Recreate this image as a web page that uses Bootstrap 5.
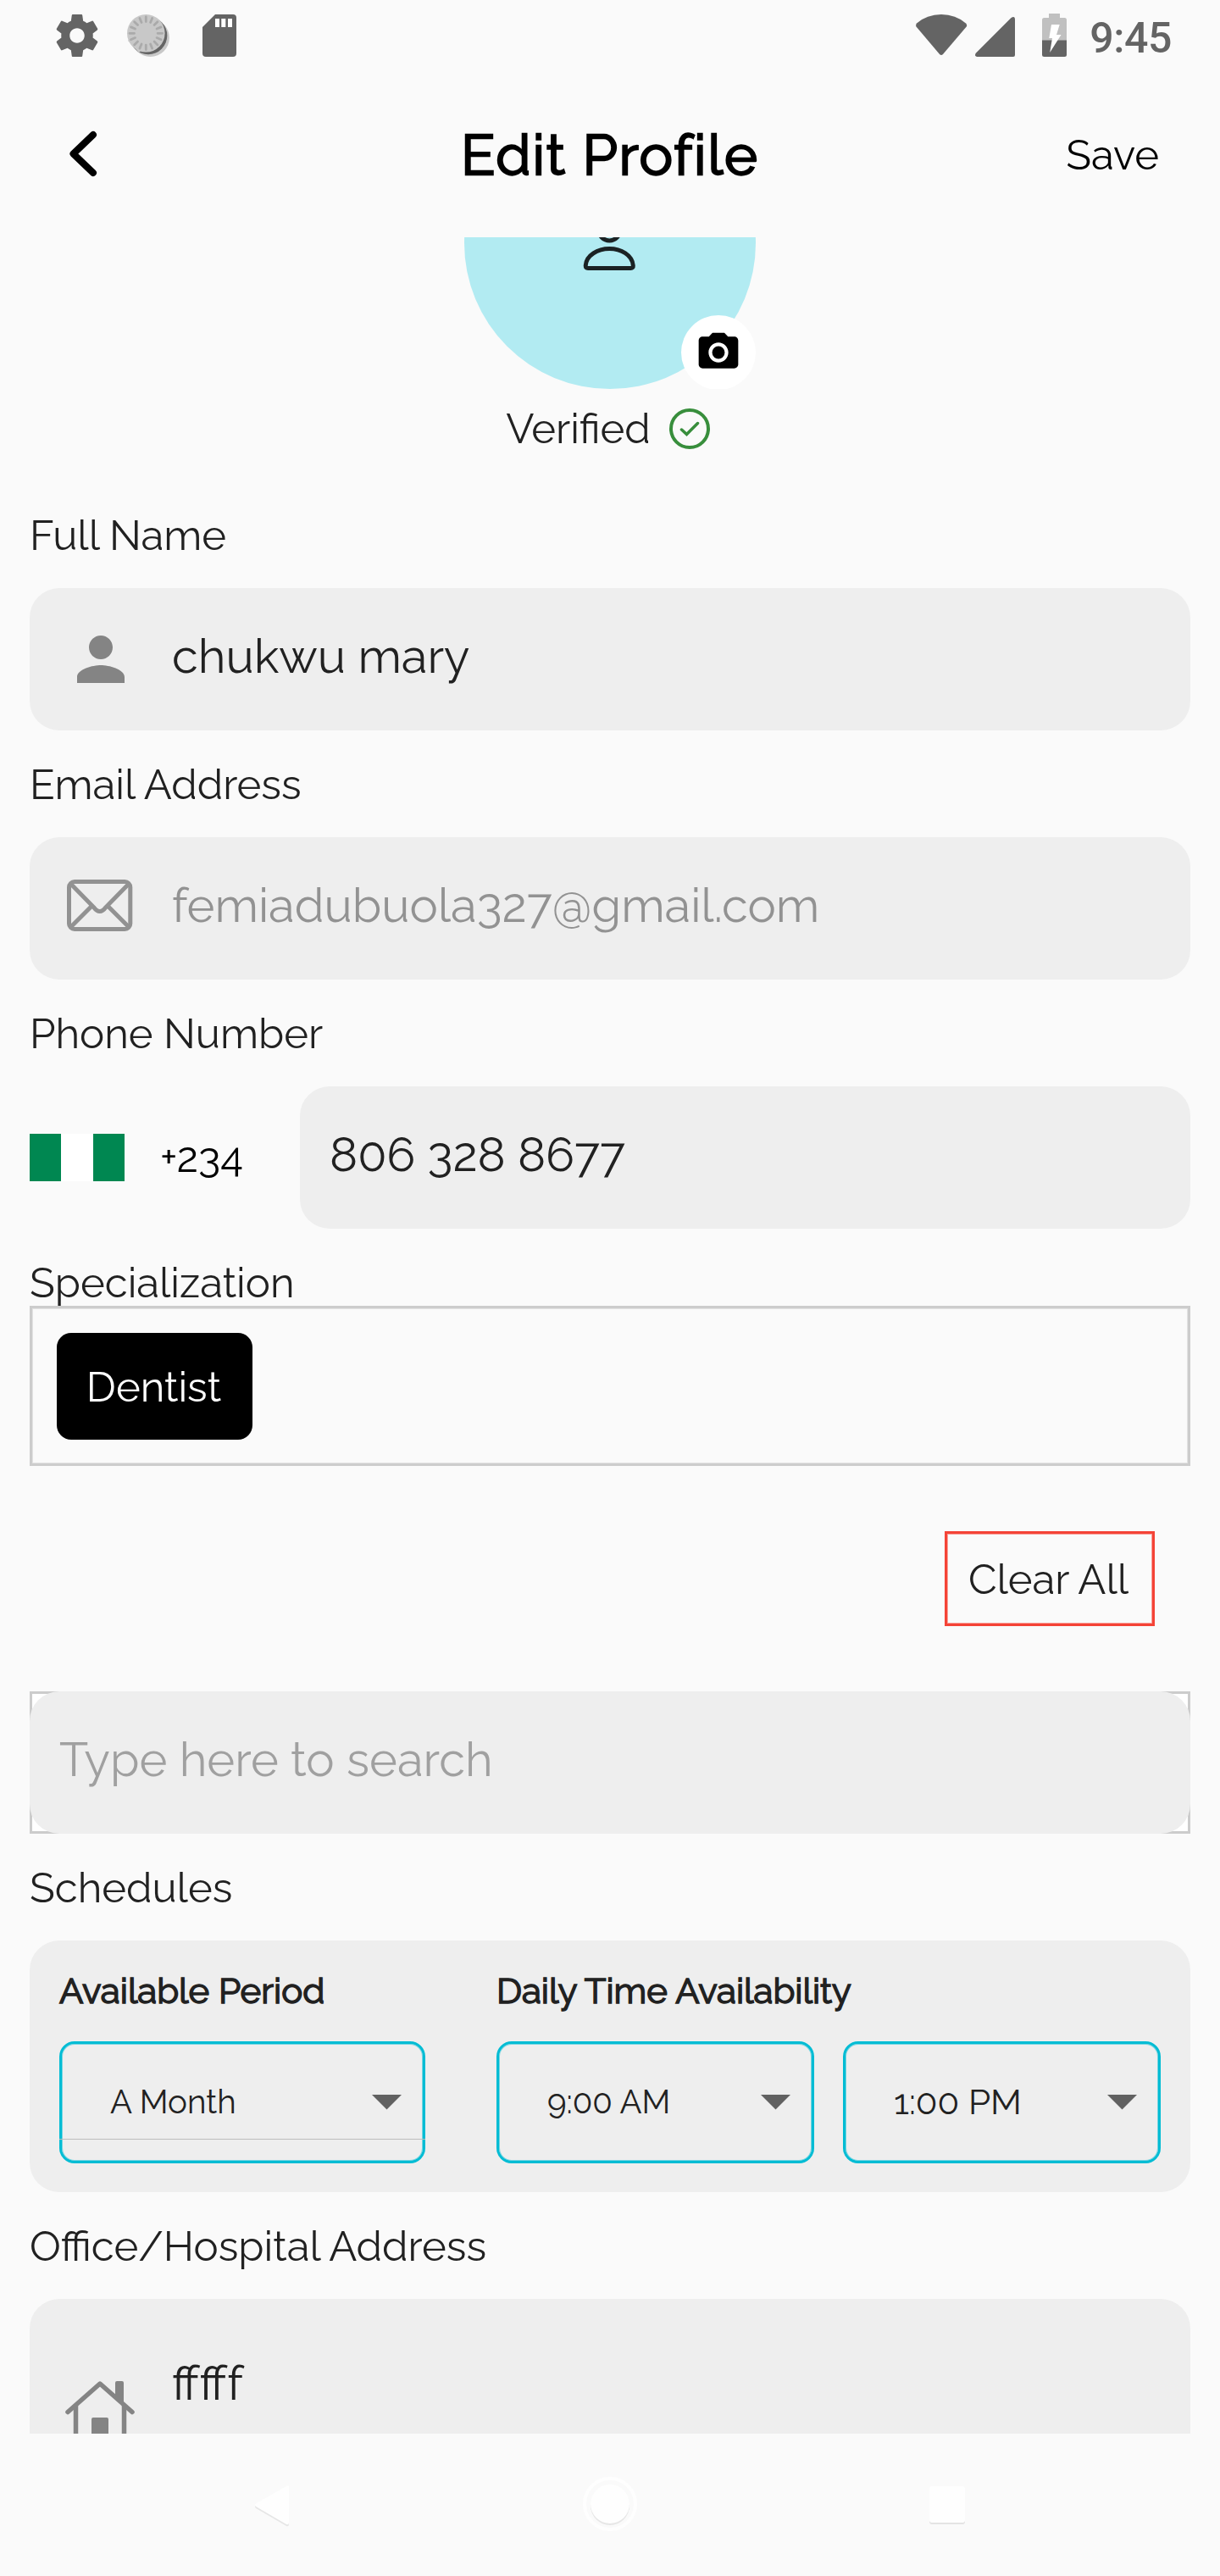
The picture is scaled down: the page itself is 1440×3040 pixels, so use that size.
<!DOCTYPE html>
<html lang="en">
<head>
<meta charset="utf-8">
<meta name="viewport" content="width=device-width, initial-scale=1">
<title>Edit Profile</title>
<link href="https://cdn.jsdelivr.net/npm/bootstrap@5.3.0/dist/css/bootstrap.min.css" rel="stylesheet">
<style>
  body { background: #fafafa; color: #212121; font-family: Raleway, Lato, sans-serif; font-size: 49px; line-height: 62px; }
  svg { display: block; flex: none; }
  .screen { width: 1440px; height: 3040px; }
  .status-bar { height: 84px; padding: 0 57px 0 66px; color: #646464; }
  .clock { font: 500 50px/60px Roboto, sans-serif; letter-spacing: -.4px; margin: 5px 0 0 27px; }
  .app-bar { height: 196px; padding: 0 72px; color: #000; }
  .side-slot { flex: 1 1 0; padding-top: 2px; }
  .back-icon { margin: -2px 0 0 6px; }
  .fake-bold { -webkit-text-stroke: 1.5px currentColor; }
  .page-title { font-size: 66.5px; font-weight: 400; line-height: 80px; letter-spacing: 1.75px; padding-top: 1px !important; -webkit-text-stroke: 2.3px currentColor; }
  .scroll-area { height: 2592px; padding: 0 35px; }
  .avatar-clip { height: 179px; }
  .avatar { width: 344px; height: 344px; background: #b2ebf2; }
  .avatar-person { margin-top: 130px; }
  .camera-btn { width: 88px; height: 88px; right: 0; bottom: -1px; }
  .verified-row { height: 94px; gap: 22px; margin-bottom: 47px; padding-right: 5px; }
  .field-label { height: 62px; margin: 32px 0; line-height: 64px; }
  .field-box { height: 168px; background: #eee; border-radius: 35px; font-size: 56px; line-height: 66px; }
  .with-icon { padding-left: 42px; gap: 42px; }
  .plain-pad { padding-left: 35px; }
  .muted-value { color: #929292; }
  .hint-value { color: #a0a0a0; }
  .flag { width: 112px; height: 56px; background: linear-gradient(90deg, #008751 33.4%, #fff 33.4% 66.6%, #008751 66.6%); }
  .country { width: 319px; gap: 42px; color: #000; }
  .label-tight { height: 59px; margin-bottom: 0; }
  .chips-box { height: 189px; border: 3px solid #ccc; box-shadow: inset 0 0 0 1px #e3e3e3; padding: 29px; background: #fafafa; position: relative; }
  .chip { height: 126px; width: 231px; border-radius: 17px; background: #000; color: #fff; padding: 1px 2px 0 0; }
  .clear-btn { width: 248px; height: 112px; margin: 77px 42px 77px 0; padding: 1px 3px 0 0; border: 3px solid #f44336; box-shadow: inset 0 0 0 1px #faa09a; }
  .search-frame { height: 168px; border: 3px solid #ccc; background: #fff; }
  .search-frame .field-box { margin: -3px; }
  .schedule-card { height: 297px; padding: 35px; background: #eee; border-radius: 35px; }
  .schedule-card h2 { font-size: 42px; font-weight: 400; line-height: 48px; margin: 1px 0 35px; }
  .period-col { width: 432px; margin-right: 84px; }
  .time-pair { gap: 34px; }
  .picker { height: 144px; border: 3px solid #00bcd4; border-radius: 18px; box-shadow: inset 0 0 0 1px #77d5e1; padding: 0 25px 1px 57px; font-size: 42px; flex: 1 1 0; }
  .picker-sm { font-size: 38.5px; }
  .picker-line { left: -3px; right: -3px; top: 112px; height: 1px; background: #bdbdbd; }
  .address-box { height: 260px; }
  .address-box svg { margin-top: 93px; }
  .address-box span { margin-top: 66px; }
  .nav-bar { height: 168px; padding: 0 280px 0 279px; }
</style>
</head>
<body>
<div class="screen d-flex flex-column overflow-hidden">

  <div class="status-bar d-flex align-items-center">
    <svg width="50" height="50" viewBox="2 2 20 20" fill="currentColor"><path d="M19.43 12.98c.04-.32.07-.64.07-.98s-.03-.66-.07-.98l2.11-1.65c.19-.15.24-.42.12-.64l-2-3.46c-.12-.22-.39-.3-.61-.22l-2.49 1c-.52-.4-1.08-.73-1.69-.98l-.38-2.65C14.46 2.18 14.25 2 14 2h-4c-.25 0-.46.18-.49.42l-.38 2.65c-.61.25-1.17.59-1.69.98l-2.49-1c-.23-.09-.49 0-.61.22l-2 3.46c-.13.22-.07.49.12.64l2.11 1.65c-.04.32-.07.65-.07.98s.03.66.07.98l-2.11 1.65c-.19.15-.24.42-.12.64l2 3.46c.12.22.39.3.61.22l2.49-1c.52.4 1.08.73 1.69.98l.38 2.65c.03.24.24.42.49.42h4c.25 0 .46-.18.49-.42l.38-2.65c.61-.25 1.17-.59 1.69-.98l2.49 1c.23.09.49 0 .61-.22l2-3.46c.12-.22.07-.49-.12-.64l-2.11-1.65zM12 15.5c-1.93 0-3.5-1.57-3.5-3.5s1.57-3.5 3.5-3.5 3.5 1.57 3.5 3.5-1.57 3.5-3.5 3.5z"/></svg>
    <svg class="ms-4" width="60" height="50" viewBox="140 17 60 50">
      <path d="M157 55.5L163 61.5 192 31 187 24z" fill="#c8c8c8"/>
      <circle cx="177.5" cy="44.6" r="22.4" fill="#c8c8c8"/>
      <circle cx="175" cy="42" r="22.3" fill="#646464"/>
      <path d="M151 48L164 62 178 50 160 36z" fill="#c8c8c8"/>
      <circle cx="172.3" cy="39.3" r="22.3" fill="#c8c8c8"/>
      <g stroke="#aaa" stroke-width="2.8" stroke-linecap="round">
        <g id="tick4"><path d="M172.3 20V25.500M172.300 53.100V58.600M153 39.300H158.500M186.100 39.300H191.600"/></g>
        <use href="#tick4" transform="rotate(22.5 172.3 39.3)"/>
        <use href="#tick4" transform="rotate(45 172.3 39.3)"/>
        <use href="#tick4" transform="rotate(67.5 172.3 39.3)"/>
      </g>
    </svg>
    <svg width="79" height="50" viewBox="200 17 79 50"><path fill="currentColor" d="M254 17H275a4 4 0 0 1 4 4V63a4 4 0 0 1-4 4H243a4 4 0 0 1-4-4V32z"/><path fill="#fff" d="M254 22h5v10h-5zM261.300 22h5v10h-5zM269 22h5v10h-5z"/></svg>

    <svg class="ms-auto" width="178" height="52" viewBox="1082 16 178 52">
      <path fill="currentColor" d="M1083 27.500Q1095 17 1112 17T1141 27.500Q1143 29.500 1141.700 31.500L1114 64Q1112 66 1110 64L1082.500 31.500Q1081.500 29.500 1083 27.500z"/>
      <path fill="currentColor" d="M1153 62.500L1194.500 21Q1199 18.500 1199 23V65q0 2-2 2H1154Q1150.500 66 1153 62.500z"/>
      <path fill="#c0c0c0" d="M1239 16h13v5h5.500q2.500 0 2.500 2.500V48h-29V23.500q0-2.500 2.500-2.500H1239z"/>
      <path fill="currentColor" d="M1231 47.500h29V64.500q0 2.500-2.500 2.500h-24q-2.500 0-2.500-2.500z"/>
      <path fill="#fff" d="M1242 29H1251.700L1248 41H1253.500L1240.200 62 1243 45H1239.300z"/>
    </svg>
    <span class="clock">9:45</span>
  </div>

  <header class="app-bar d-flex align-items-center">
    <div class="side-slot">
      <svg class="back-icon" width="40" height="60" viewBox="78 152 40 60" fill="none" stroke="#000" stroke-width="8" stroke-linecap="round" stroke-linejoin="round"><path d="M110 159L86.500 181.500 110 204"/></svg>
    </div>
    <h1 class="page-title m-0">Edit Profile</h1>
    <div class="side-slot text-end">Save</div>
  </header>

  <main class="scroll-area overflow-hidden">
    <div class="avatar-clip d-flex justify-content-center align-items-end overflow-hidden">
      <div class="avatar rounded-circle position-relative flex-shrink-0 d-flex justify-content-center">
        <svg class="avatar-person" width="84" height="84" viewBox="678 245 84 84" fill="none" stroke="#1b2224" stroke-width="5">
          <circle cx="719.3" cy="271.2" r="12.700"/>
          <path d="M694 316.500H744.600Q747.500 316.500 747.300 313.300C746.300 301 733 293.500 719.300 293.500S692 301 691.200 313.300Q691.200 316.500 694 316.500z"/>
        </svg>
        <span class="camera-btn position-absolute bg-white rounded-circle d-flex align-items-center justify-content-center">
          <svg width="56" height="56" viewBox="0 0 24 24"><circle cx="12" cy="12" r="3.2"/><path d="M9 2L7.170 4H4c-1.100 0-2 .9-2 2v12c0 1.100.9 2 2 2h16c1.100 0 2-.9 2-2V6c0-1.100-.9-2-2-2h-3.170L15 2H9zm3 15c-2.760 0-5-2.240-5-5s2.240-5 5-5 5 2.240 5 5-2.240 5-5 5z"/></svg>
        </span>
      </div>
    </div>
    <div class="verified-row d-flex align-items-center justify-content-center">
      <span>Verified</span>
      <svg width="48" height="48" viewBox="790 482 48 48" fill="none" stroke="#388e3c"><circle cx="814" cy="506" r="22" stroke-width="4"/><path stroke-width="3.5" stroke-linecap="round" d="M804.500 507L810.500 512.500 823.500 499.500"/></svg>
    </div>

    <div class="field-label">Full Name</div>
    <div class="field-box with-icon d-flex align-items-center">
      <svg width="84" height="84" viewBox="0 0 24 24" fill="#848484"><path d="M12 12c2.210 0 4-1.790 4-4s-1.790-4-4-4-4 1.790-4 4 1.790 4 4 4zm0 2c-2.670 0-8 1.340-8 4v2h16v-2c0-2.660-5.330-4-8-4z"/></svg>
      <span class="mb-2">chukwu mary</span>
    </div>

    <div class="field-label">Email Address</div>
    <div class="field-box with-icon muted-value d-flex align-items-center">
      <svg width="84" height="84" viewBox="77 1030 84 84" fill="none" stroke="currentColor" stroke-width="5"><rect x="81.500" y="1040.500" width="72.300" height="56" rx="6.500"/><path d="M83 1042.500L110.500 1070.500Q117.700 1080.500 125 1070.500L152.500 1042.500M83 1094.500L108 1069.500M152.500 1094.500L127.500 1069.500"/></svg>
      <span class="mb-2">femiadubuola327@gmail.com</span>
    </div>

    <div class="field-label">Phone Number</div>
    <div class="d-flex align-items-center">
      <div class="country d-flex align-items-center"><div class="flag"></div><span>+234</span></div>
      <div class="field-box plain-pad flex-grow-1 d-flex align-items-center"><span class="mb-2">806 328 8677</span></div>
    </div>

    <div class="field-label label-tight">Specialization</div>
    <div class="chips-box"><div class="chip d-flex align-items-center justify-content-center">Dentist</div></div>

    <div class="d-flex justify-content-end">
      <div class="clear-btn d-flex align-items-center justify-content-center">Clear All</div>
    </div>

    <div class="search-frame">
      <div class="field-box plain-pad hint-value d-flex align-items-center"><span class="mb-2">Type here to search</span></div>
    </div>

    <div class="field-label">Schedules</div>
    <section class="schedule-card d-flex">
      <div class="period-col">
        <h2 class="fake-bold">Available Period</h2>
        <div class="picker picker-sm position-relative d-flex align-items-center justify-content-between">
          <span>A Month</span>
          <svg width="35" height="18" viewBox="0 0 35 18"><path fill="#616161" d="M0 0H35L17.500 17.500z"/></svg>
          <i class="picker-line position-absolute"></i>
        </div>
      </div>
      <div class="flex-grow-1">
        <h2 class="fake-bold">Daily Time Availability</h2>
        <div class="time-pair d-flex">
          <div class="picker picker-sm d-flex align-items-center justify-content-between">
            <span>9:00 AM</span>
            <svg width="35" height="18" viewBox="0 0 35 18"><path fill="#616161" d="M0 0H35L17.500 17.500z"/></svg>
          </div>
          <div class="picker d-flex align-items-center justify-content-between">
            <span>1:00 PM</span>
            <svg width="35" height="18" viewBox="0 0 35 18"><path fill="#616161" d="M0 0H35L17.500 17.500z"/></svg>
          </div>
        </div>
      </div>
    </section>

    <div class="field-label">Office/Hospital Address</div>
    <div class="field-box address-box with-icon d-flex align-items-start">
      <svg width="84" height="84" viewBox="77 2805 84 84" fill="none" stroke="#848484" stroke-width="5.500" stroke-linecap="round" stroke-linejoin="round"><path d="M80 2845.500L118 2812 156 2845.500"/><path d="M89.500 2838V2890M146.500 2838V2890" stroke-linecap="butt"/><path fill="#848484" stroke="none" d="M136 2811q0-2 2-2h6q2 0 2 2V2838L136 2828zM108 2854q0-2 2-2h16q2 0 2 2V2890H108z"/></svg>
      <span>fffff</span>
    </div>
  </main>

  <nav class="nav-bar d-flex align-items-center justify-content-between">
    <svg width="84" height="84" viewBox="0 0 84 84"><path d="M62 23Q62 20 59 22L23 42.500Q21 44 23 46L59 67Q62 68 62 65z" fill="#e6e6e6"/><path d="M62 21Q62 18 59 20L23 40.500Q21 42 23 44L59 65Q62 66 62 63z" fill="#fefefe"/></svg>
    <svg width="84" height="84" viewBox="0 0 84 84"><circle cx="42" cy="41" r="30" fill="none" stroke="#fefefe" stroke-width="4"/><circle cx="42" cy="43" r="23" fill="#e6e6e6"/><circle cx="42" cy="41" r="23" fill="#fefefe"/></svg>
    <svg width="84" height="84" viewBox="0 0 84 84"><rect x="21" y="22" width="42" height="43" rx="3" fill="#e4e4e4"/><rect x="21" y="20" width="42" height="43" rx="3" fill="#fefefe"/></svg>
  </nav>
</div>
<script src="https://cdn.jsdelivr.net/npm/bootstrap@5.3.0/dist/js/bootstrap.bundle.min.js"></script>
</body>
</html>
